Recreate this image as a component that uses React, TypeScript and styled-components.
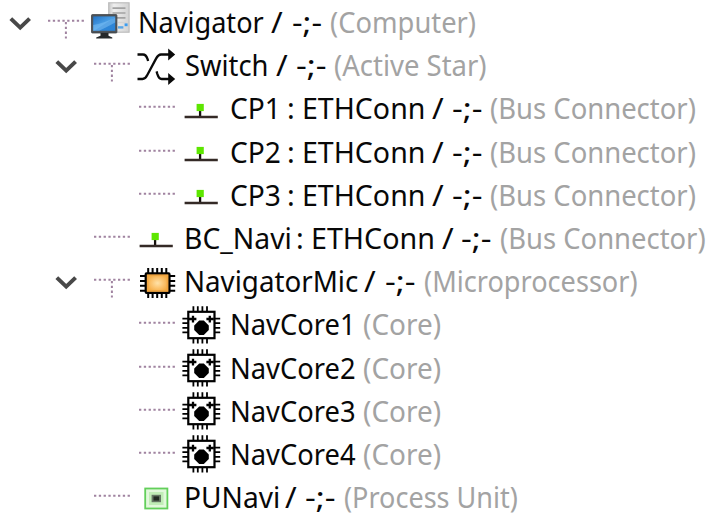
import React, { useLayoutEffect, useRef, useState } from "react";
import styled, { createGlobalStyle } from "styled-components";

const GlobalStyle = createGlobalStyle`
  html, body { margin: 0; background: #fff; overflow: hidden; }
`;

const Tree = styled.div`
  display: flex;
  flex-direction: column;
  width: 719px;
  height: 523px;
  overflow: hidden;
  background: #fff;
  font-family: "Noto Sans", "Open Sans", sans-serif;
  font-size: 28.8px;
  line-height: 43.2px;
`;

const Row = styled.div<{ $depth: number }>`
  display: flex;
  flex: none;
  height: 43.2px;
  padding-left: ${(p) => 9 + p.$depth * 45.6}px;
`;

const Twisty = styled.svg`
  flex: none;
  width: 22px;
  height: 43.2px;
  margin-right: 17px;
`;

const Connector = styled.svg`
  flex: none;
  width: 37px;
  height: 43.2px;
  margin-right: 6.2px;
`;

const Icon = styled.svg`
  flex: none;
  width: 38.4px;
  height: 38.4px;
  margin-top: 2.4px;
  margin-right: 8.4px;
  overflow: visible;
`;

const Slot = styled.span<{ $width: number; $gap: number }>`
  flex: none;
  width: ${(p) => p.$width}px;
  height: 43.2px;
  margin-left: ${(p) => p.$gap}px;
`;

const Words = styled.span<{ $muted?: boolean }>`
  display: inline-block;
  white-space: pre;
  transform-origin: 0 50%;
  color: ${(p) => (p.$muted ? "#a3a3a3" : "#080808")};
`;

/* [text, space before it, width] */
type Word = [string, number, number];

function FitText({ word, muted }: { word: Word; muted?: boolean }) {
  const [text, gap, width] = word;
  const ref = useRef<HTMLSpanElement>(null);
  const [scale, setScale] = useState(1);
  useLayoutEffect(() => {
    const natural = ref.current ? ref.current.offsetWidth : 0;
    if (natural) setScale(width / natural);
  }, [text, width]);
  return (
    <Slot $width={width} $gap={gap}>
      <Words ref={ref} $muted={muted} style={{ transform: `scaleX(${scale})` }}>
        {text}
      </Words>
    </Slot>
  );
}

type Kind = "computer" | "switch" | "bus" | "chip" | "core" | "unit";

function ComputerIcon() {
  return (
    <Icon viewBox="0 0 38.4 38.4">
      <defs>
        <linearGradient id="screen" x1="0" y1="0" x2="1" y2="1">
          <stop offset="0" stopColor="#2474c6" />
          <stop offset="0.5" stopColor="#4a9fe6" />
          <stop offset="0.54" stopColor="#3187d6" />
          <stop offset="1" stopColor="#2a83d8" />
        </linearGradient>
        <linearGradient id="tower" x1="0" y1="0" x2="1" y2="0">
          <stop offset="0" stopColor="#c6c6c6" />
          <stop offset="0.25" stopColor="#efefef" />
          <stop offset="1" stopColor="#d2d2d2" />
        </linearGradient>
      </defs>
      <rect x="17.7" y="0.8" width="20.4" height="29.4" fill="url(#tower)" stroke="#bdbdbd" strokeWidth="1.2" />
      <path d="M21.5 6.2h13M21.5 11h13M21.5 15.8h13" stroke="#a2a2a2" strokeWidth="1.7" />
      <path d="M27 20.5h8" stroke="#d4d4d4" strokeWidth="1.4" />
      <rect x="33.6" y="21.4" width="3" height="2.8" fill="#3c9df0" />
      <path d="M27 25.4h5.4" stroke="#5aa6e6" strokeWidth="2.4" />
      <rect x="0.5" y="12.6" width="25.4" height="18.4" rx="0.8" fill="#4e5358" stroke="#3c4146" strokeWidth="0.8" />
      <rect x="2.2" y="14.4" width="22" height="14.4" fill="url(#screen)" />
      <path d="M2.2 28.8V23Q12 21.5 24.2 15.4v5Q14 26 8 28.8z" fill="#83c4f6" opacity="0.5" />
      <path d="M9.5 31h8v2.8l3.8 1.6v1.2H5.2v-1.2L9.5 33.8z" fill="#25282a" />
    </Icon>
  );
}

function SwitchIcon() {
  return (
    <Icon viewBox="0 0 38.4 38.4" fill="none" stroke="#0a0a0a" strokeWidth="2.3">
      <path d="M0.5 8.5H6q3 0 4.6 4.6l.5 1.9" />
      <path d="M0.5 33H5.5q2.8 0 4.8-4L19.2 12.4Q21.3 8.5 24 8.5H33" />
      <path d="M19.6 25.4l.6 2.2q1.7 5.4 4.4 5.4H33" />
      <path d="M31.2 2.4l7 6.1-7 6.1zM31.2 26.9l7 6.1-7 6.1z" fill="#0a0a0a" stroke="none" />
    </Icon>
  );
}

function BusIcon() {
  return (
    <Icon viewBox="0 0 38.4 38.4">
      <path d="M18.1 21v7" stroke="#17120f" strokeWidth="2.3" />
      <path d="M2.6 27.9H35.8" stroke="#342a26" strokeWidth="2.5" />
      <rect x="14.6" y="14.9" width="7.2" height="7.2" fill="#5de600" />
    </Icon>
  );
}

function ChipIcon() {
  return (
    <Icon viewBox="0 0 38.4 38.4">
      <defs>
        <radialGradient id="die">
          <stop offset="0" stopColor="#ffe2a8" />
          <stop offset="0.55" stopColor="#fbc26c" />
          <stop offset="1" stopColor="#f3a93f" />
        </radialGradient>
      </defs>
      <path
        d="M11.2 5.9v30M15.6 5.9v30M20.2 5.9v30M24.8 5.9v30M29.3 5.9v30M3 14.1h35.2M3 19.1h35.2M3 23.8h35.2M3 28.8h35.2"
        stroke="#000"
        strokeWidth="2"
      />
      <rect x="8.7" y="11.4" width="23.8" height="19.4" rx="0.8" fill="url(#die)" stroke="#000" strokeWidth="2.2" />
      <rect x="10.8" y="13.4" width="19.6" height="15.4" fill="none" stroke="#f0a541" strokeWidth="1.4" />
    </Icon>
  );
}

function CoreIcon() {
  return (
    <Icon viewBox="0 0 38.4 38.4">
      <path
        d="M11.4 1.2v37.2M15.8 1.2v37.2M20.4 1.2v37.2M25 1.2v37.2M.4 13.7h37.8M.4 18.2h37.8M.4 22.8h37.8M.4 27.4h37.8"
        stroke="#000"
        strokeWidth="1.8"
      />
      <rect x="6.3" y="6.8" width="26.2" height="26.4" fill="#fff" stroke="#000" strokeWidth="2.2" />
      <path d="M7 14h7.4M11 10.8v6.6M24.4 14h7.4M27.8 10.8v6.6" stroke="#000" strokeWidth="2.3" />
      <path d="M17.2 15.4h4.6l5 5v4.6l-5 5h-4.6l-5-5v-4.6z" fill="#000" />
    </Icon>
  );
}

function UnitIcon() {
  return (
    <Icon viewBox="0 0 38.4 38.4">
      <rect x="8.2" y="11.5" width="22.2" height="20" fill="#e2f8dc" stroke="#62cf5a" strokeWidth="1.8" />
      <rect x="12" y="15" width="14.5" height="13" fill="#c0edb6" />
      <rect x="14.6" y="17.8" width="9.4" height="7.4" fill="#657663" />
      <rect x="16.5" y="19.4" width="5.6" height="4.2" fill="#222b22" />
    </Icon>
  );
}

const icons: Record<Kind, () => React.ReactElement> = {
  computer: ComputerIcon,
  switch: SwitchIcon,
  bus: BusIcon,
  chip: ChipIcon,
  core: CoreIcon,
  unit: UnitIcon,
};

interface Node {
  depth: number;
  open?: boolean;
  icon: Kind;
  name: Word[];
  kind: Word;
}

const bus = (n: number): Node => ({
  depth: 2,
  icon: "bus",
  name: [[`CP${n}`, 1, 50.8], [":", 6, 8], ["ETHConn", 7.2, 123.8], ["/", 6, 12], ["-;-", 8, 30.2]],
  kind: ["(Bus Connector)", 8.2, 205.8],
});

const core = (n: number): Node => ({
  depth: 2,
  icon: "core",
  name: [[`NavCore${n}`, 0.8, 125.2]],
  kind: ["(Core)", 8.2, 77.6],
});

const nodes: Node[] = [
  {
    depth: 0,
    open: true,
    icon: "computer",
    name: [["Navigator", 0.3, 126], ["/", 6.7, 12], ["-;-", 9, 29.7]],
    kind: ["(Computer)", 8.5, 146.2],
  },
  {
    depth: 1,
    open: true,
    icon: "switch",
    name: [["Switch", 1.2, 83.6], ["/", 7.6, 12], ["-;-", 8, 30.3]],
    kind: ["(Active Star)", 8, 152.6],
  },
  bus(1),
  bus(2),
  bus(3),
  {
    depth: 1,
    icon: "bus",
    name: [["BC_Navi", 0.3, 108], [":", 4.1, 8], ["ETHConn", 7, 124.4], ["/", 6.6, 12], ["-;-", 7.5, 30.2]],
    kind: ["(Bus Connector)", 8.3, 205.6],
  },
  {
    depth: 1,
    open: true,
    icon: "chip",
    name: [["NavigatorMic", 0.3, 174.2], ["/", 6.4, 12], ["-;-", 8.6, 30.2]],
    kind: ["(Microprocessor)", 8.4, 213.8],
  },
  core(1),
  core(2),
  core(3),
  core(4),
  {
    depth: 1,
    icon: "unit",
    name: [["PUNavi", 0.3, 96.6], ["/", 4.6, 12], ["-;-", 8, 30.3]],
    kind: ["(Process Unit)", 8.4, 173.6],
  },
];

function TreeRow({ node }: { node: Node }) {
  const Glyph = icons[node.icon];
  return (
    <Row $depth={node.depth}>
      <Twisty viewBox="0 0 22 43.2">
        {node.open && <path d="M1.8 18.6 11.2 27.6 20.6 18.6" fill="none" stroke="#484848" strokeWidth="4" />}
      </Twisty>
      <Connector viewBox="0 0 37 43.2" fill="none" stroke="#a083a0" strokeWidth="2" strokeDasharray="2.3 2.5">
        <path d="M0 20.8H37" />
        {node.open && <path d="M17.9 22V38.5" />}
      </Connector>
      <Glyph />
      {node.name.map((word) => (
        <FitText key={word[0]} word={word} />
      ))}
      <FitText word={node.kind} muted />
    </Row>
  );
}

export default function App() {
  return (
    <>
      <GlobalStyle />
      <Tree>
        {nodes.map((node) => (
          <TreeRow key={node.name[0][0]} node={node} />
        ))}
      </Tree>
    </>
  );
}
